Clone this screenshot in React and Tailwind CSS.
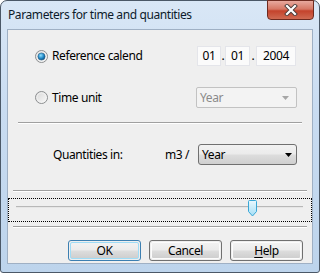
import React from 'react';

const Radio = ({ checked, id }) => (
  <svg width="13" height="13" viewBox="0 0 13 13" className="shrink-0">
    <defs>
      <linearGradient id={`rb-${id}`} x1="0" y1="0" x2="1" y2="1">
        <stop offset="0" stopColor="#d6d6d6" />
        <stop offset="1" stopColor="#fbfbfb" />
      </linearGradient>
      <radialGradient id={`rd-${id}`} cx="0.4" cy="0.35" r="0.7">
        <stop offset="0" stopColor="#8fe0ff" />
        <stop offset="0.6" stopColor="#1e85c4" />
        <stop offset="1" stopColor="#0b4a7a" />
      </radialGradient>
    </defs>
    <circle cx="6.5" cy="6.5" r="6" fill={`url(#rb-${id})`} stroke="#8c8e90" />
    <circle cx="6.5" cy="6.5" r="4.6" fill="none" stroke="#f4f4f4" strokeWidth="0.8" />
    {checked && <circle cx="6.5" cy="6.5" r="3.6" fill={`url(#rd-${id})`} stroke="#2b5f85" strokeWidth="0.6" />}
  </svg>
);

const Separator = ({ className }) => (
  <div className={`h-[2px] border-t border-[#a0a0a0] border-b border-b-white ${className}`} />
);

const DateBox = ({ value, w }) => (
  <div className={`${w} h-[20px] border border-[#e4e5ea] bg-[#fbfbfb] flex items-center justify-center`}>
    {value}
  </div>
);

const Button = ({ children, primary }) => (
  <div
    className={`w-[73px] h-[21px] rounded-[3px] border ${
      primary ? 'border-[#3c7fb1]' : 'border-[#707070]'
    } p-px`}
  >
    <div
      className={`h-full rounded-[2px] border ${
        primary ? 'border-[#9fdcf6]' : 'border-[#fcfcfc]'
      } bg-[linear-gradient(to_bottom,#f2f2f2_0%,#ebebeb_48%,#dddddd_52%,#cfcfcf_100%)] flex items-center justify-center leading-none`}
    >
      {children}
    </div>
  </div>
);

export default function App() {
  return (
    <div className="w-[320px] h-[273px] bg-white">
      <div className="w-[320px] h-[273px] flex flex-col rounded-t-[7px] rounded-b-[3px] border border-[#4b5867] bg-[linear-gradient(to_bottom,#d9e7f6_0%,#c9dcf1_40%,#bdd4ec_100%)] font-['Noto_Sans',sans-serif] text-[12px] tracking-[-0.4px] text-black">
        {/* title bar */}
        <div className="h-[28px] flex items-start justify-between shrink-0">
          <div className="pl-[7px] pt-[6px] leading-[16px] text-[#0d1b2b]">Parameters for time and quantities</div>
          <div className="-mt-px mr-[5px] w-[47px] h-[20px] rounded-b-[4px] border border-[#6e2a1f] bg-[linear-gradient(to_bottom,#e8a99e_0%,#d67764_45%,#c4432c_55%,#cf6a52_100%)] flex items-center justify-center">
            <svg width="14" height="12" viewBox="0 0 14 12">
              <path d="M3 2 L11 10 M11 2 L3 10" stroke="#4a3b39" strokeWidth="4" strokeLinecap="square" />
              <path d="M3 2 L11 10 M11 2 L3 10" stroke="#ffffff" strokeWidth="2.2" strokeLinecap="square" />
            </svg>
          </div>
        </div>

        {/* client */}
        <div className="mx-[6px] mb-[8px] flex-1 border border-[#9fb0c4] bg-[#efefef] flex flex-col">
          {/* row 1 */}
          <div className="mt-[16px] h-[20px] flex items-center">
            <div className="ml-[27px] flex items-center gap-[4px]">
              <Radio checked id="a" />
              <span>Reference calend</span>
            </div>
            <div className="ml-auto mr-[16px] flex items-center">
              <DateBox value="01" w="w-[24px]" />
              <span className="w-[4px] text-center">.</span>
              <DateBox value="01" w="w-[25px]" />
              <span className="w-[6px] text-center">.</span>
              <DateBox value="2004" w="w-[40px]" />
            </div>
          </div>

          {/* row 2 */}
          <div className="mt-[21px] h-[21px] flex items-center">
            <div className="ml-[27px] flex items-center gap-[4px]">
              <Radio id="b" />
              <span>Time unit</span>
            </div>
            <div className="ml-auto mr-[15px] w-[101px] h-[21px] rounded-[2px] border border-[#c2c2c2] bg-[#f3f3f3] flex items-center justify-between pl-[3px] pr-[7px] text-[#8a8a8a]">
              <span>Year</span>
              <svg width="7" height="4" viewBox="0 0 7 4">
                <path d="M0 0 H7 L3.5 4 Z" fill="#a6a6a6" />
              </svg>
            </div>
          </div>

          <Separator className="mt-[14px] ml-[10px] w-[284px]" />

          {/* row 3 */}
          <div className="mt-[20px] h-[21px] flex items-center">
            <span className="ml-[45px] w-[112px]">Quantities in:</span>
            <span>m3 /</span>
            <div className="ml-auto mr-[15px] w-[99px] h-[21px] rounded-[3px] border border-[#707070] bg-[linear-gradient(to_bottom,#f2f2f2_0%,#ebebeb_48%,#dddddd_52%,#cfcfcf_100%)] flex items-center justify-between pl-[3px] pr-[4px]">
              <span>Year</span>
              <svg width="7" height="4" viewBox="0 0 7 4">
                <path d="M0 0 H7 L3.5 4 Z" fill="#000000" />
              </svg>
            </div>
          </div>

          <Separator className="mt-[25px] ml-[5px] w-[294px]" />

          {/* slider in focus rect */}
          <div className="mt-[6px] h-[24px] border border-dotted border-black relative">
            <div className="mt-[7px] ml-[7px] w-[287px] h-[2px] border-t border-[#b8b8b8] border-b border-b-[#e6e6e6]" />
            <svg className="absolute left-[238px] top-[1px]" width="11" height="17" viewBox="0 0 11 17">
              <defs>
                <linearGradient id="thumb" x1="0" y1="0" x2="0" y2="1">
                  <stop offset="0" stopColor="#eaf8fe" />
                  <stop offset="1" stopColor="#a3def6" />
                </linearGradient>
              </defs>
              <path d="M1.5 1.5 Q1.5 0.5 2.5 0.5 H8.5 Q9.5 0.5 9.5 1.5 V11.5 L5.5 16 L1.5 11.5 Z" fill="url(#thumb)" stroke="#3aa7d6" />
            </svg>
          </div>

          <Separator className="mt-[4px] ml-[5px] w-[294px]" />

          {/* buttons */}
          <div className="mt-[12px] flex justify-end gap-[8px] mr-[9px]">
            <Button primary>OK</Button>
            <Button>Cancel</Button>
            <Button>
              <span><span className="underline underline-offset-2">H</span>elp</span>
            </Button>
          </div>
        </div>
      </div>
    </div>
  );
}
